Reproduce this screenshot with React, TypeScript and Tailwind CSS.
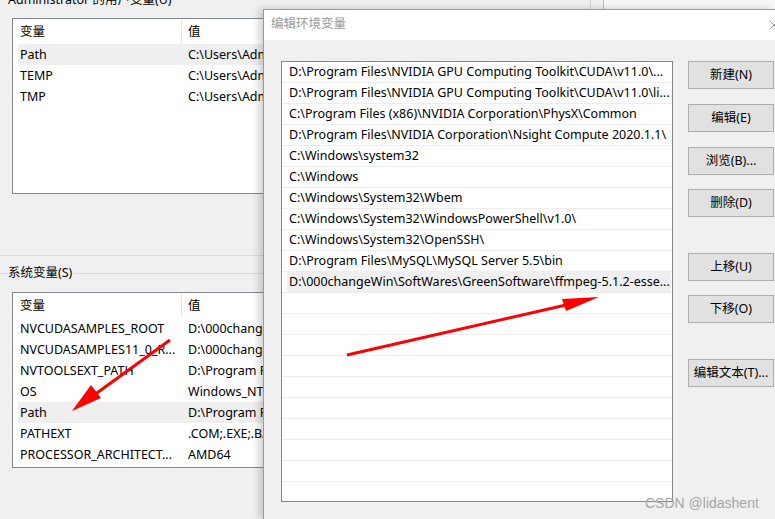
const userVars = [
  ["Path", "C:\\Users\\Administrator\\AppData\\Local\\Microsoft\\WindowsApps;"],
  ["TEMP", "C:\\Users\\Administrator\\AppData\\Local\\Temp"],
  ["TMP", "C:\\Users\\Administrator\\AppData\\Local\\Temp"],
];

const sysVars = [
  ["NVCUDASAMPLES_ROOT", "D:\\000changeWin\\SoftWares"],
  ["NVCUDASAMPLES11_0_R...", "D:\\000changeWin\\SoftWares"],
  ["NVTOOLSEXT_PATH", "D:\\Program Files\\NVIDIA Corporation"],
  ["OS", "Windows_NT"],
  ["Path", "D:\\Program Files\\NVIDIA GPU Computing"],
  ["PATHEXT", ".COM;.EXE;.BAT;.CMD;.VBS"],
  ["PROCESSOR_ARCHITECT...", "AMD64"],
];

const paths = [
  "D:\\Program Files\\NVIDIA GPU Computing Toolkit\\CUDA\\v11.0\\...",
  "D:\\Program Files\\NVIDIA GPU Computing Toolkit\\CUDA\\v11.0\\li...",
  "C:\\Program Files (x86)\\NVIDIA Corporation\\PhysX\\Common",
  "D:\\Program Files\\NVIDIA Corporation\\Nsight Compute 2020.1.1\\",
  "C:\\Windows\\system32",
  "C:\\Windows",
  "C:\\Windows\\System32\\Wbem",
  "C:\\Windows\\System32\\WindowsPowerShell\\v1.0\\",
  "C:\\Windows\\System32\\OpenSSH\\",
  "D:\\Program Files\\MySQL\\MySQL Server 5.5\\bin",
  "D:\\000changeWin\\SoftWares\\GreenSoftware\\ffmpeg-5.1.2-esse...",
];

const buttons = [
  { label: "新建(N)", mt: "mt-0" },
  { label: "编辑(E)", mt: "mt-[15px]" },
  { label: "浏览(B)...", mt: "mt-[15px]" },
  { label: "删除(D)", mt: "mt-[14px]" },
  { label: "上移(U)", mt: "mt-[36px]" },
  { label: "下移(O)", mt: "mt-[14px]" },
  { label: "编辑文本(T)...", mt: "mt-[36px]" },
];

type VarListProps = {
  rows: string[][];
  selected: number;
};

const VarList = ({ rows, selected }: VarListProps) => {
  return (
    <div className="ml-[12px] w-[320px] h-[176px] border border-[#828790] bg-white">
      <div className="flex h-[25px] items-center">
        <div className="w-[168px] shrink-0 pl-[7px] pt-[2px]">变量</div>
        <div className="w-px h-[23px] shrink-0 bg-[#e5e5e5]" />
        <div className="pl-[6px] pt-[2px]">值</div>
      </div>
      {rows.map(([name, value], i) => (
        <div
          key={name + i}
          className={
            i === selected
              ? "ml-[5px] flex h-[21px] items-center pt-px bg-[#efefef]"
              : "ml-[5px] flex h-[21px] items-center pt-px"
          }
        >
          <div className="w-[170px] shrink-0 pl-[2px] whitespace-nowrap overflow-hidden">{name}</div>
          <div className="whitespace-nowrap">{value}</div>
        </div>
      ))}
    </div>
  );
};

export default function App() {
  const emptyRows = Array.from({ length: 10 });

  return (
    <div className="relative flex w-[775px] h-[519px] overflow-hidden bg-[#f0f0f0] text-[12.5px] text-black font-['Noto_Sans','Noto_Sans_CJK_SC',sans-serif]">
      {/* background window: environment variables */}
      <div className="w-[263px] shrink-0 h-full overflow-hidden">
        <div className="h-[18px] overflow-hidden pl-[8px]">
          <div className="-mt-[9px] leading-[18px] whitespace-nowrap">Administrator 的用户变量(U)</div>
        </div>
        <VarList rows={userVars} selected={0} />
        <div className="mt-[61px] h-px bg-[#dadada]" />
        <div className="flex h-[34px] items-center">
          <div className="w-[8px] h-px bg-[#dadada]" />
          <div className="pr-[3px] whitespace-nowrap">系统变量(S)</div>
          <div className="flex-1 h-px bg-[#dadada]" />
        </div>
        <div className="mt-[2px]">
          <VarList rows={sysVars} selected={4} />
        </div>
      </div>

      {/* edit dialog */}
      <div className="flex-1 flex flex-col">
        <div className="flex h-[9px] shrink-0">
          <div className="w-[327px]" />
          <div className="w-px bg-[#d2d2d2]" />
          <div className="w-[12px]" />
          <div className="w-px bg-[#bdbdbd]" />
          <div className="flex-1 bg-[#f7f7f7]" />
        </div>
        <div className="relative flex-1 flex flex-col border-l border-t border-[#9a9a9a] bg-[#f0f0f0] shadow-[-4px_0_8px_rgba(0,0,0,0.18)]">
          <div className="flex h-[30px] shrink-0 items-center bg-white pl-[7px]">
            <span className="text-[#999999] -mt-[2px]">编辑环境变量</span>
            <svg className="ml-auto -mr-[4px]" width="10" height="10" viewBox="0 0 10 10">
              <path d="M0.5 0.5 L9.5 9.5 M9.5 0.5 L0.5 9.5" stroke="#9a9a9a" strokeWidth="1" />
            </svg>
          </div>
          <div className="flex pl-[17px] pt-[21px]">
            <div className="w-[392px] h-[441px] shrink-0 overflow-hidden border border-[#828790] bg-white">
              {paths.map((p, i) => (
                <div key={p} className="h-[21px] border-b border-[#ededed]">
                  <div
                    className={
                      i === paths.length - 1
                        ? "ml-[5px] mr-px h-full flex items-center pl-[2px] pt-px bg-[#efefef] whitespace-nowrap overflow-hidden"
                        : "ml-[5px] mr-px h-full flex items-center pl-[2px] pt-px whitespace-nowrap overflow-hidden"
                    }
                  >
                    {p}
                  </div>
                </div>
              ))}
              {emptyRows.map((_, i) => (
                <div key={i} className="h-[21px] border-b border-[#ededed]" />
              ))}
            </div>
            <div className="ml-[15px] flex w-[86px] shrink-0 flex-col">
              {buttons.map((b) => (
                <div
                  key={b.label}
                  className={`${b.mt} flex h-[28px] items-center justify-center border border-[#adadad] bg-[#e1e1e1] whitespace-nowrap`}
                >
                  {b.label}
                </div>
              ))}
            </div>
          </div>
        </div>
      </div>

      {/* red annotation arrows */}
      <svg className="absolute inset-0 pointer-events-none" width="775" height="519" viewBox="0 0 775 519">
        <line x1="170" y1="340" x2="90" y2="398" stroke="#ff0000" strokeWidth="3" />
        <polygon points="72,411 101,398 91,385" fill="#ff0000" />
        <line x1="347" y1="355" x2="566" y2="305" stroke="#ff0000" strokeWidth="3" />
        <polygon points="599,297 566,311 562,299" fill="#ff0000" />
      </svg>

      <div className="absolute left-[645px] top-[493px] text-[14px] leading-[20px] text-[#a6a6a6] font-['Liberation_Sans',sans-serif]">
        CSDN @lidashent
      </div>
    </div>
  );
}
